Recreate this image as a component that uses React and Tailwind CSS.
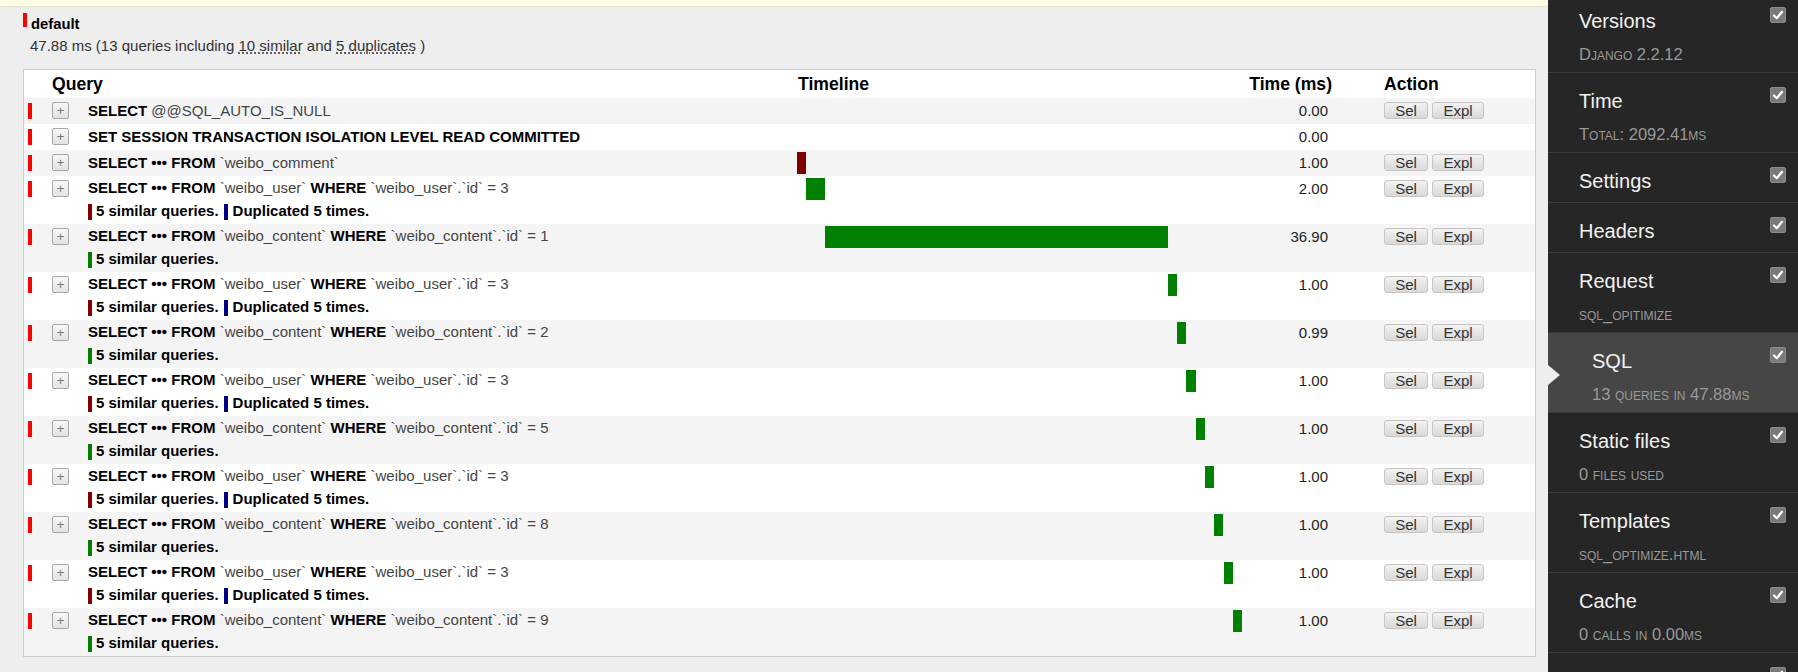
import React from "react";

const B = (t) => ({ b: true, t });
const N = (t) => ({ b: false, t });

const userSql = [B("SELECT"), N(" "), B("•••"), N(" "), B("FROM"), N(" `weibo_user` "), B("WHERE"), N(" `weibo_user`.`id` = 3")];
const contentSql = (id) => [
  B("SELECT"), N(" "), B("•••"), N(" "), B("FROM"), N(" `weibo_content` "), B("WHERE"), N(` \`weibo_content\`.\`id\` = ${id}`),
];

const queries = [
  { sql: [B("SELECT"), N(" @@SQL_AUTO_IS_NULL")], time: 0, actions: true },
  { sql: [B("SET SESSION TRANSACTION ISOLATION LEVEL READ COMMITTED")], time: 0, actions: false },
  { sql: [B("SELECT"), N(" "), B("•••"), N(" "), B("FROM"), N(" `weibo_comment`")], time: 1, bar: "#800000", actions: true },
  { sql: userSql, time: 2, bar: "#008000", similar: "#800000", dup: true, actions: true },
  { sql: contentSql(1), time: 36.9, bar: "#008000", similar: "#008000", actions: true },
  { sql: userSql, time: 1, bar: "#008000", similar: "#800000", dup: true, actions: true },
  { sql: contentSql(2), time: 0.99, bar: "#008000", similar: "#008000", actions: true },
  { sql: userSql, time: 1, bar: "#008000", similar: "#800000", dup: true, actions: true },
  { sql: contentSql(5), time: 1, bar: "#008000", similar: "#008000", actions: true },
  { sql: userSql, time: 1, bar: "#008000", similar: "#800000", dup: true, actions: true },
  { sql: contentSql(8), time: 1, bar: "#008000", similar: "#008000", actions: true },
  { sql: userSql, time: 1, bar: "#008000", similar: "#800000", dup: true, actions: true },
  { sql: contentSql(9), time: 1, bar: "#008000", similar: "#008000", actions: true },
];

const total = 47.88;

const panels = [
  { title: "Versions", sub: "Django 2.2.12" },
  { title: "Time", sub: "Total: 2092.41ms" },
  { title: "Settings" },
  { title: "Headers" },
  { title: "Request", sub: "sql_opitimize" },
  { title: "SQL", sub: "13 queries in 47.88ms", active: true },
  { title: "Static files", sub: "0 files used" },
  { title: "Templates", sub: "sql_optimize.html" },
  { title: "Cache", sub: "0 calls in 0.00ms" },
  { title: "Signals", sub: "31 receivers of 15 signals" },
];

const cols = "grid grid-cols-[28px_36px_709px_445px_134px_1fr]";

function Check() {
  return (
    <div className="w-[16px] h-[16px] rounded-[2px] bg-[#7a7a7a] border border-[#8a8a8a] flex items-center justify-center">
      <svg width="12" height="12" viewBox="0 0 12 12">
        <path d="M2 6.5 L4.8 9.2 L10 2.8" fill="none" stroke="#fff" strokeWidth="2.2" strokeLinecap="round" strokeLinejoin="round" />
      </svg>
    </div>
  );
}

function ActionButton({ children, w }) {
  return (
    <span className={`${w} h-[17px] leading-[15px] text-center text-[15px] text-[#333] rounded-[3px] border border-[#c6c6c6] bg-gradient-to-b from-[#f2f2f2] to-[#d9d9d9]`}>
      {children}
    </span>
  );
}

export default function App() {
  let cum = 0;
  return (
    <div className="flex w-[1798px] h-[672px] overflow-hidden font-['Liberation_Sans',Arial,sans-serif]">
      {/* main panel */}
      <div className="w-[1548px] bg-[#eeeeee] text-[#333]">
        <div className="h-[7px] bg-[#fffde2] border-b border-[#e2e2d0]" />
        <div className="pl-[23px] pt-[6px] flex items-start">
          <div className="w-[4px] h-[14px] bg-[#ff0000]" />
          <div className="ml-[4px] mt-[3px] text-[14.8px] leading-[17px] font-bold text-black">default</div>
        </div>
        <div className="pl-[30px] mt-[4px] text-[15px] leading-[17px]">
          47.88 ms (13 queries including{" "}
          <span className="underline decoration-dotted underline-offset-2">10 similar</span> and{" "}
          <span className="underline decoration-dotted underline-offset-2">5 duplicates</span> )
        </div>

        <div className="ml-[23px] mt-[15px] w-[1513px] bg-white border border-[#cccccc]">
          <div className={`${cols} h-[28px] items-center text-[17.6px] font-bold text-black`}>
            <div />
            <div className="col-span-2">Query</div>
            <div className="pl-[1px]">Timeline</div>
            <div className="text-right pr-[44px]">Time (ms)</div>
            <div className="pl-[8px]">Action</div>
          </div>
          {queries.map((q, i) => {
            const left = (cum / total) * 100;
            const width = (q.time / total) * 100;
            cum += q.time;
            const double = !!q.similar;
            return (
              <div
                key={i}
                className={`${cols} ${double ? "h-[48px]" : "h-[26px]"} ${i % 2 === 0 ? "bg-[#f4f4f4]" : "bg-white"}`}
              >
                <div className="pl-[4px] pt-[5px]">
                  <div className="w-[4px] h-[16px] bg-[#ff0000]" />
                </div>
                <div className="pt-[4px]">
                  <div className="w-[17px] h-[17px] rounded-[2px] border border-[#a8a8a8] bg-gradient-to-b from-[#f8f8f8] to-[#e2e2e2] flex items-center justify-center text-[13px] leading-none text-[#777]">
                    +
                  </div>
                </div>
                <div className="text-[15px]">
                  <div className={`${double ? "h-[25px]" : "h-[26px]"} flex items-center whitespace-pre`}>
                    {q.sql.map((p, j) => (
                      <span key={j} className={p.b ? "font-bold text-black" : "text-[#444]"}>
                        {p.t}
                      </span>
                    ))}
                  </div>
                  {double && (
                    <div className="h-[21px] flex items-center font-bold text-black">
                      <span className="w-[4px] h-[16px] mr-[4px]" style={{ background: q.similar }} />
                      <span>5 similar queries.</span>
                      {q.dup && (
                        <>
                          <span className="w-[4px] h-[16px] ml-[5px] mr-[5px] bg-[#000080]" />
                          <span>Duplicated 5 times.</span>
                        </>
                      )}
                    </div>
                  )}
                </div>
                <div className="pt-[2px]">
                  <div className="relative h-[22px]">
                    {q.time > 0 && (
                      <div
                        className="absolute top-0 h-[22px]"
                        style={{ left: `${left}%`, width: `${width}%`, background: q.bar }}
                      />
                    )}
                  </div>
                </div>
                <div className="h-[26px] flex items-center justify-end pr-[48px] text-[15px] text-[#222]">
                  {q.time.toFixed(2)}
                </div>
                <div className="pl-[8px] pt-[4px]">
                  {q.actions && (
                    <div className="flex gap-[4px]">
                      <ActionButton w="w-[44px]">Sel</ActionButton>
                      <ActionButton w="w-[52px]">Expl</ActionButton>
                    </div>
                  )}
                </div>
              </div>
            );
          })}
        </div>
      </div>

      {/* sidebar */}
      <div className="w-[250px] bg-[#262626]">
        <div className="-mt-[7px]">
          {panels.map((p) => (
            <div
              key={p.title}
              className={`relative border-b border-[#3a3a3a] ${p.sub ? "h-[80px]" : "h-[50px]"} ${p.active ? "bg-[#464646] pl-[44px]" : "pl-[31px]"}`}
            >
              {p.active && (
                <div className="absolute left-0 top-[32px] w-0 h-0 border-y-[10px] border-y-transparent border-l-[12px] border-l-[#eeeeee]" />
              )}
              <div className="absolute right-[12px] top-[14px]">
                <Check />
              </div>
              <div className="pt-[15px] text-[20px] leading-[26px] text-[#f2f2f2]">{p.title}</div>
              {p.sub && (
                <div className="mt-[10px] text-[16.5px] leading-[20px] text-[#999] [font-variant:small-caps]">{p.sub}</div>
              )}
            </div>
          ))}
        </div>
      </div>
    </div>
  );
}
